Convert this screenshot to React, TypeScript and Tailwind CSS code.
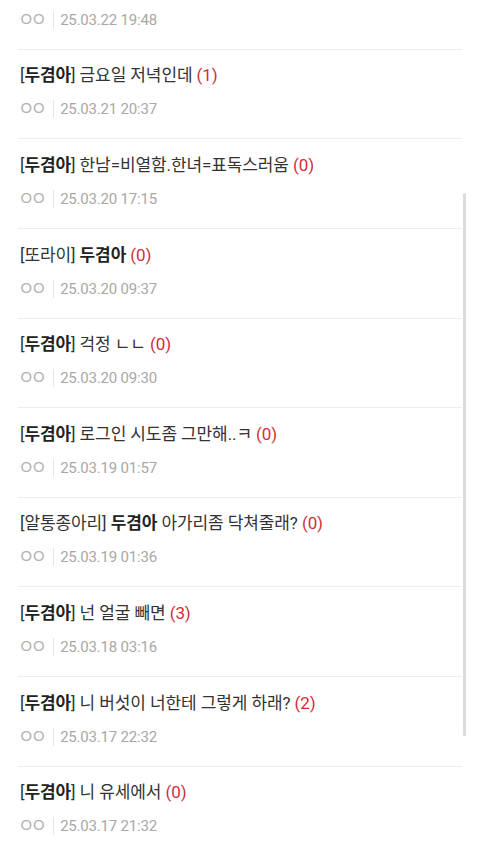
const posts = [
  { pre: "", name: "", post: "", count: -1, date: "25.03.22 19:48" },
  { pre: "[", name: "두겸아", post: "] 금요일 저녁인데", count: 1, date: "25.03.21 20:37" },
  { pre: "[", name: "두겸아", post: "] 한남=비열함.한녀=표독스러움", count: 0, date: "25.03.20 17:15" },
  { pre: "[또라이] ", name: "두겸아", post: "", count: 0, date: "25.03.20 09:37" },
  { pre: "[", name: "두겸아", post: "] 걱정 ㄴㄴ", count: 0, date: "25.03.20 09:30" },
  { pre: "[", name: "두겸아", post: "] 로그인 시도좀 그만해..ㅋ", count: 0, date: "25.03.19 01:57" },
  { pre: "[알통종아리] ", name: "두겸아", post: " 아가리좀 닥쳐줄래?", count: 0, date: "25.03.19 01:36" },
  { pre: "[", name: "두겸아", post: "] 넌 얼굴 빼면", count: 3, date: "25.03.18 03:16" },
  { pre: "[", name: "두겸아", post: "] 니 버섯이 너한테 그렇게 하래?", count: 2, date: "25.03.17 22:32" },
  { pre: "[", name: "두겸아", post: "] 니 유세에서", count: 0, date: "25.03.17 21:32" },
];

export default function App() {
  return (
    <div className="relative h-[847px] w-[480px] overflow-hidden bg-white font-['Roboto','Noto_Sans_CJK_KR',sans-serif]">
      <ul className="-mt-[40px] px-[18px]">
        {posts.map((p, i) => (
          <li
            key={i}
            className="flex h-[89.625px] flex-col justify-end border-b border-[#eeeeee] px-[2px] pb-[18px]"
          >
            {p.count >= 0 && (
              <p className="text-[17px] leading-[24px] tracking-[-0.1px] text-[#333333]">
                {p.pre}
                <b className="font-bold text-[#222222]">{p.name}</b>
                {p.post} <span className="text-[#cf2f3b]">({p.count})</span>
              </p>
            )}
            <div className="mt-[11px] flex items-center text-[15px] leading-[22px] tracking-[-0.2px] text-[#a8a8a8]">
              <span className="-ml-[2px] whitespace-nowrap text-[18px] tracking-[-4px] text-[#b4b4b4]">ㅇㅇ</span>
              <span className="mr-[6px] ml-[10px] h-[18px] w-px bg-[#e6e6e6]" />
              <span>{p.date}</span>
            </div>
          </li>
        ))}
      </ul>
      <div className="absolute left-[463px] top-[193px] h-[543px] w-[3px] rounded-full bg-[#dcdcdc]" />
    </div>
  );
}
